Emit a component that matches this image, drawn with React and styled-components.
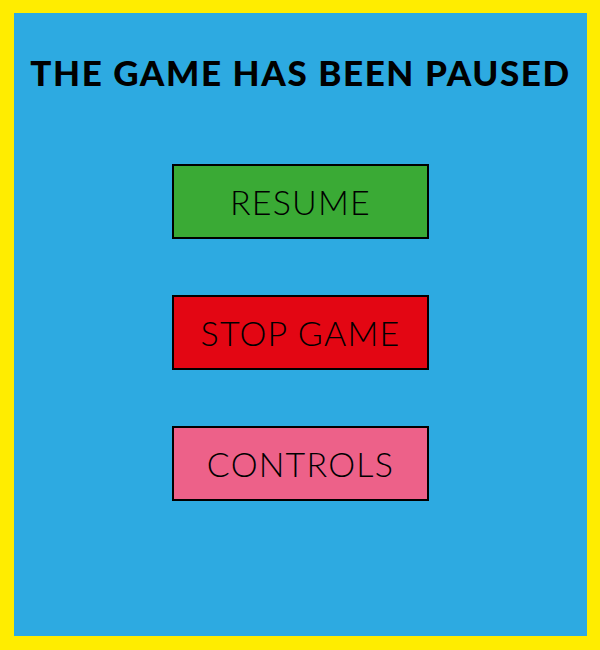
import React from "react";
import styled, { createGlobalStyle } from "styled-components";

const Global = createGlobalStyle`
  html, body { margin: 0; padding: 0; background: #ffed00; }
  body { width: 600px; height: 650px; overflow: hidden; }
`;

const Frame = styled.div`
  width: 600px;
  height: 650px;
  box-sizing: border-box;
  padding: 13px 13px 14px 14px;
  background: #ffed00;
  display: flex;
`;

const Panel = styled.div`
  flex: 1;
  background: #2daae1;
  display: flex;
  flex-direction: column;
  align-items: center;
`;

const Title = styled.h1`
  margin: 39px 0 0;
  font-family: Lato, "Liberation Sans", sans-serif;
  font-weight: 900;
  font-size: 35px;
  line-height: 40px;
  color: #000;
  letter-spacing: 1.6px;
  white-space: nowrap;
`;

const Buttons = styled.div`
  margin-top: 72px;
  display: flex;
  flex-direction: column;
  gap: 56px;
`;

const Button = styled.button`
  width: 257px;
  height: 75px;
  box-sizing: border-box;
  border: 2px solid #000;
  background: ${(p) => p.$bg};
  color: #000;
  font-family: Lato, "Liberation Sans", sans-serif;
  font-weight: 300;
  font-size: 34px;
  letter-spacing: 1.2px;
  padding: 0;
  display: flex;
  align-items: center;
  justify-content: center;
  cursor: pointer;
`;

export default function App() {
  return (
    <>
      <Global />
      <Frame>
        <Panel>
          <Title>THE GAME HAS BEEN PAUSED</Title>
          <Buttons>
            <Button $bg="#3aaa35">RESUME</Button>
            <Button $bg="#e30613">STOP GAME</Button>
            <Button $bg="#ed6189">CONTROLS</Button>
          </Buttons>
        </Panel>
      </Frame>
    </>
  );
}
